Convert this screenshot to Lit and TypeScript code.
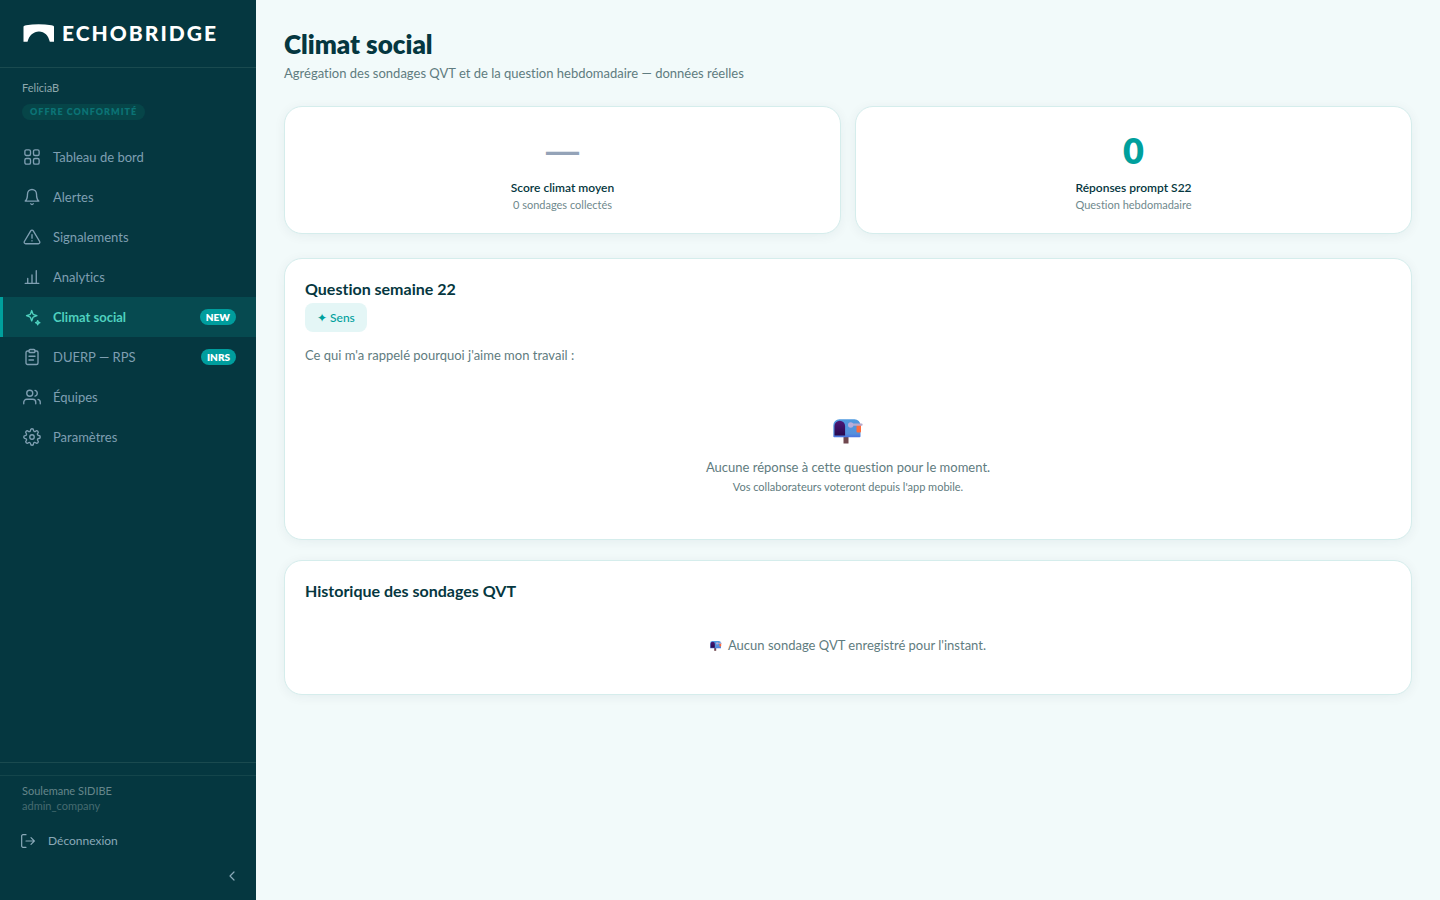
import { LitElement, html, css, svg, nothing } from "lit";
import { customElement, property } from "lit/decorators.js";

const icons = {
  grid: svg`<rect x="2.5" y="2.5" width="7.5" height="7.5" rx="2"/><rect x="14" y="2.5" width="7.5" height="7.5" rx="2"/><rect x="2.5" y="14" width="7.5" height="7.5" rx="2"/><rect x="14" y="14" width="7.5" height="7.5" rx="2"/>`,
  bell: svg`<path d="M18 8A6 6 0 0 0 6 8c0 7-3 9.500-3 9.500h18s-3-2.500-3-9.500"/><path d="M13.700 21a2 2 0 0 1-3.400 0"/>`,
  alert: svg`<path d="M10.290 3.860 1.820 18a2 2 0 0 0 1.710 3h16.940a2 2 0 0 0 1.710-3L13.710 3.860a2 2 0 0 0-3.420 0z"/><path d="M12 9v4.500M12 17v.2"/>`,
  chart: svg`<path d="M3 20.500h18M6.300 20.500v-6.500M12 20.500V9.300M17.700 20.500V3.500"/>`,
  sparkle: svg`<path d="M11.600 3.400l1.500 4.200a2 2 0 0 0 1.200 1.200l4.200 1.500-4.200 1.500a2 2 0 0 0-1.200 1.200l-1.500 4.200-1.500-4.200a2 2 0 0 0-1.200-1.200l-4.200-1.500 4.200-1.500a2 2 0 0 0 1.200-1.200z"/><path d="M19.600 16.800l.8 2 2 .8-2 .8-.8 2-.8-2-2-.8 2-.8z"/>`,
  clipboard: svg`<path d="M16 4h2a2 2 0 0 1 2 2v14a2 2 0 0 1-2 2H6a2 2 0 0 1-2-2V6a2 2 0 0 1 2-2h2"/><rect x="8" y="2" width="8" height="4" rx="1.500"/><path d="M8 11h8M8 16h6"/>`,
  users: svg`<path d="M17 21v-2a4 4 0 0 0-4-4H5a4 4 0 0 0-4 4v2"/><circle cx="9" cy="7" r="4"/><path d="M23 21v-2a4 4 0 0 0-3-3.870M16 3.130a4 4 0 0 1 0 7.750"/>`,
  gear: svg`<circle cx="12" cy="12" r="3"/><path d="M19.400 15a1.650 1.650 0 0 0 .33 1.820l.06.06a2 2 0 0 1-2.830 2.830l-.06-.06a1.650 1.650 0 0 0-1.820-.33 1.650 1.650 0 0 0-1 1.510V21a2 2 0 0 1-4 0v-.09A1.650 1.650 0 0 0 9 19.400a1.650 1.650 0 0 0-1.820.33l-.06.06a2 2 0 0 1-2.830-2.830l.06-.06a1.650 1.650 0 0 0 .33-1.820 1.650 1.650 0 0 0-1.510-1H3a2 2 0 0 1 0-4h.09A1.650 1.650 0 0 0 4.600 9a1.650 1.650 0 0 0-.33-1.820l-.06-.06a2 2 0 0 1 2.830-2.830l.06.06a1.650 1.650 0 0 0 1.820.33H9a1.650 1.650 0 0 0 1-1.510V3a2 2 0 0 1 4 0v.09a1.650 1.650 0 0 0 1 1.510 1.650 1.650 0 0 0 1.820-.33l.06-.06a2 2 0 0 1 2.830 2.830l-.06.06a1.650 1.650 0 0 0-.33 1.820V9a1.650 1.650 0 0 0 1.510 1H21a2 2 0 0 1 0 4h-.09a1.650 1.650 0 0 0-1.510 1z"/>`,
  logout: svg`<path d="M9 21.500H4.500a2 2 0 0 1-2-2v-15a2 2 0 0 1 2-2H9M16.500 17l5-5-5-5M21.500 12H9"/>`,
  chevron: svg`<path d="M15 18l-6-6 6-6"/>`,
};

type IconName = keyof typeof icons;

const icon = (name: IconName) =>
  html`<svg class="icon" viewBox="0 0 24 24" aria-hidden="true">${icons[name]}</svg>`;

interface NavItem {
  icon: IconName;
  label: string;
  tag?: string;
  active?: boolean;
}

const navItems: NavItem[] = [
  { icon: "grid", label: "Tableau de bord" },
  { icon: "bell", label: "Alertes" },
  { icon: "alert", label: "Signalements" },
  { icon: "chart", label: "Analytics" },
  { icon: "sparkle", label: "Climat social", tag: "NEW", active: true },
  { icon: "clipboard", label: "DUERP — RPS", tag: "INRS" },
  { icon: "users", label: "Équipes" },
  { icon: "gear", label: "Paramètres" },
];

@customElement("mail-box")
class MailBox extends LitElement {
  static styles = css`
    :host { display: inline-block; }
    svg { display: block; width: 100%; }
  `;
  render() {
    return html`<svg viewBox="0 0 30 25" aria-hidden="true">
      <defs>
        <linearGradient id="body" x1="0" y1="0" x2="0" y2="1">
          <stop offset="0" stop-color="#4f9ae0"/><stop offset=".8" stop-color="#5590dc"/><stop offset="1" stop-color="#4a72e0"/>
        </linearGradient>
        <linearGradient id="hole" x1="0" y1="0" x2="0" y2="1">
          <stop offset="0" stop-color="#4c1878"/><stop offset="1" stop-color="#28094e"/>
        </linearGradient>
      </defs>
      <rect x="10.500" y="17" width="5" height="7.500" fill="#70474e"/>
      <path d="M6.500 .3H21.500a6 6 0 0 1 6 6V17.300a.9.9 0 0 1-.9.9H1.200a.9.9 0 0 1-.9-.9V6.500A6.200 6.200 0 0 1 6.500.3z" fill="url(#body)"/>
      <path d="M1.500 7a5.300 5.300 0 0 1 10.600 0v9.600H1.500z" fill="url(#hole)"/>
      <path d="M23.500 6h4.500v6.500q0 1-1 1h-2.500q-1 0-1-1z" fill="#ff6b3c"/>
      <rect x="17" y="4.600" width="12.600" height="2.200" rx="1" fill="#b9a9cc"/>
      <circle cx="17.700" cy="6" r="2.700" fill="#b7addb"/>
    </svg>`;
  }
}

@customElement("app-sidebar")
class AppSidebar extends LitElement {
  static styles = css`
    :host {
      display: flex;
      flex-direction: column;
      background: #053740;
      color: #7f9fb2;
    }
    .icon {
      width: 18px;
      height: 18px;
      flex: none;
      fill: none;
      stroke: currentColor;
      stroke-width: 1.8;
      stroke-linecap: round;
      stroke-linejoin: round;
    }
    .brand {
      display: flex;
      align-items: center;
      gap: 7px;
      height: 65px;
      padding: 0 22px 2px;
      border-bottom: 1px solid #1a4a4f;
      color: #fff;
      text-decoration: none;
    }
    .bridge { width: 33px; height: 20px; flex: none; }
    .name {
      font-size: 21px;
      font-weight: 900;
      letter-spacing: 2px;
    }
    .company { padding: 12px 22px; font-size: 11px; line-height: 16px; color: #8fa8ae; }
    .plan {
      display: table;
      margin-top: 8px;
      padding: 0 8px;
      border-radius: 8px;
      background: #064548;
      color: #0b7375;
      font-size: 9px;
      font-weight: 800;
      letter-spacing: 1px;
    }
    nav { flex: 1; padding-top: 5px; }
    .item {
      display: flex;
      align-items: center;
      gap: 12px;
      height: 40px;
      box-sizing: border-box;
      padding: 0 20px;
      border-left: 3px solid transparent;
      color: inherit;
      font-size: 13px;
      line-height: 18px;
      text-decoration: none;
    }
    .item.active {
      border-color: #00a09d;
      background: #064a50;
      color: #4fd1bf;
      font-weight: 700;
    }
    .label { flex: 1; }
    .tag {
      padding: 0 6px;
      border-radius: 8px;
      background: #009d9d;
      color: #fff;
      font-size: 10px;
      line-height: 16px;
      font-weight: 800;
    }
    footer { border-top: 1px solid #1a4a4f; padding-top: 12px; }
    .user {
      border-top: 1px solid #14454b;
      padding: 7px 22px 8px;
      font-size: 11px;
      line-height: 15px;
      color: #66868b;
    }
    .role { color: #466b70; }
    button {
      display: flex;
      align-items: center;
      border: 0;
      background: none;
      color: #8aa9b8;
      font: inherit;
      cursor: pointer;
    }
    .logout { gap: 12px; padding: 10px 20px; font-size: 12px; line-height: 20px; }
    .logout .icon, .collapse .icon { width: 16px; height: 16px; }
    .collapse { margin-left: auto; padding: 7px 16px 16px; }
  `;
  render() {
    return html`
      <a class="brand" href="#">
        <svg class="bridge" viewBox="0 0 33 20" aria-hidden="true">
          <path fill="#fff" d="M1.500 3.600Q2 2.600 4 2.300Q16.500.2 29.500 2.300Q31.800 2.600 32 3.600V18.800h-4.200C26.500 12.500 22.500 8.400 17 8.400S7 12.500 5.500 18.800h-4z"/>
        </svg>
        <span class="name">ECHOBRIDGE</span>
      </a>
      <div class="company">FeliciaB<span class="plan">OFFRE CONFORMITÉ</span></div>
      <nav>
        ${navItems.map(
          (n) => html`<a class="item ${n.active ? "active" : ""}" href="#" aria-current=${n.active ? "page" : nothing}>
            ${icon(n.icon)}<span class="label">${n.label}</span>
            ${n.tag ? html`<span class="tag">${n.tag}</span>` : nothing}
          </a>`
        )}
      </nav>
      <footer>
        <div class="user">
          <div>Soulemane SIDIBE</div>
          <div class="role">admin_company</div>
        </div>
        <button class="logout">${icon("logout")}<span>Déconnexion</span></button>
        <button class="collapse" aria-label="Réduire le menu">${icon("chevron")}</button>
      </footer>
    `;
  }
}

@customElement("stat-card")
class StatCard extends LitElement {
  @property() value = "";
  @property() label = "";
  @property() note = "";
  @property({ type: Boolean }) empty = false;
  static styles = css`
    :host { display: block; padding: 20px; text-align: center; }
    .value { font-size: 36px; line-height: 46px; font-weight: 800; color: #00a09d; }
    .value.empty { font-family: "Noto Sans", sans-serif; font-weight: 500; color: #94a3b8; }
    .label { margin-top: 6px; font-size: 12px; line-height: 18px; font-weight: 600; color: #053740; }
    .note { font-size: 11px; line-height: 16px; color: #6f898d; }
  `;
  render() {
    return html`
      <div class="value ${this.empty ? "empty" : ""}">${this.value}</div>
      <div class="label">${this.label}</div>
      <div class="note">${this.note}</div>
    `;
  }
}

@customElement("app-root")
class AppRoot extends LitElement {
  static styles = css`
    :host {
      display: grid;
      grid-template-columns: 256px 1fr;
      min-height: 100vh;
      background: #f2fafa;
      color: #5f7c80;
      font-family: Lato, "Noto Sans", sans-serif;
      font-size: 13px;
      font-variant-ligatures: none;
    }
    main { padding: 28px; }
    h1 { margin: 0; font-size: 26px; line-height: 32px; font-weight: 800; color: #053740; }
    .lead { margin: 4px 0 24px; line-height: 18px; }
    .stats { display: grid; grid-template-columns: 1fr 1fr; gap: 14px; margin-bottom: 24px; }
    .card {
      border: 1px solid #d5edec;
      border-radius: 18px;
      background: #fff;
      box-shadow: 0 2px 12px rgba(5, 55, 64, 0.06);
    }
    .panel { padding: 20px; margin-bottom: 20px; }
    h2 { margin: 0; font-size: 16px; line-height: 20px; font-weight: 700; color: #053740; }
    .theme {
      display: table;
      margin-top: 4px;
      padding: 0 12px;
      border-radius: 8px;
      background: #e4f6f6;
      color: #00a09d;
      font-size: 12px;
      line-height: 29px;
      font-weight: 500;
    }
    .question { margin: 14px 0 0; line-height: 18px; }
    .empty { padding: 55px 0 22px; text-align: center; line-height: 20px; }
    .big { width: 30px; margin-bottom: 13px; vertical-align: top; }
    .hint { font-size: 11px; line-height: 20px; }
    .history { padding: 34px 0 19px; text-align: center; line-height: 20px; }
    .small { width: 12px; margin-right: 6px; vertical-align: -1px; }
  `;
  render() {
    return html`
      <app-sidebar></app-sidebar>
      <main>
        <h1>Climat social</h1>
        <p class="lead">Agrégation des sondages QVT et de la question hebdomadaire — données réelles</p>
        <div class="stats">
          <stat-card class="card" empty value="—" label="Score climat moyen" note="0 sondages collectés"></stat-card>
          <stat-card class="card" value="0" label="Réponses prompt S22" note="Question hebdomadaire"></stat-card>
        </div>
        <section class="card panel">
          <h2>Question semaine 22</h2>
          <span class="theme">✦ Sens</span>
          <p class="question">Ce qui m'a rappelé pourquoi j'aime mon travail :</p>
          <div class="empty">
            <mail-box class="big"></mail-box>
            <div>Aucune réponse à cette question pour le moment.</div>
            <div class="hint">Vos collaborateurs voteront depuis l'app mobile.</div>
          </div>
        </section>
        <section class="card panel">
          <h2>Historique des sondages QVT</h2>
          <div class="history"><mail-box class="small"></mail-box>Aucun sondage QVT enregistré pour l'instant.</div>
        </section>
      </main>
    `;
  }
}
